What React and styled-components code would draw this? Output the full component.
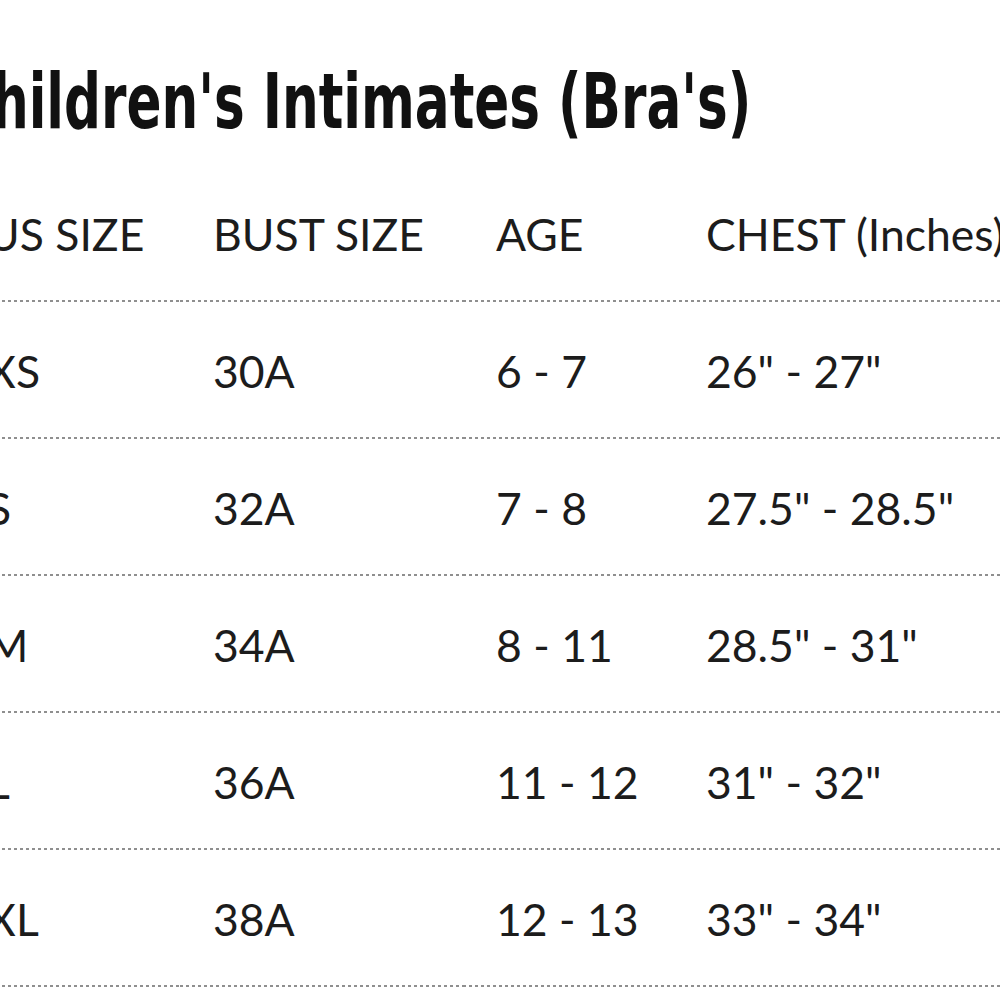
import styled, { createGlobalStyle } from "styled-components";

const rows = [
  ["XS", "30A", "6 - 7", "26\" - 27\""],
  ["S", "32A", "7 - 8", "27.5\" - 28.5\""],
  ["M", "34A", "8 - 11", "28.5\" - 31\""],
  ["L", "36A", "11 - 12", "31\" - 32\""],
  ["XL", "38A", "12 - 13", "33\" - 34\""],
];

const headers = ["US SIZE", "BUST SIZE", "AGE", "CHEST (Inches)"];

function App() {
  return (
    <Page>
      <GlobalStyle />
      <TitleWrap>
        <Title>Children's Intimates (Bra's)</Title>
      </TitleWrap>
      <Table>
        {headers.map((h) => (
          <Cell key={h}>{h}</Cell>
        ))}
        {rows.map((r) =>
          r.map((v, i) => <Cell key={r[0] + i}>{v}</Cell>)
        )}
      </Table>
    </Page>
  );
}

export default App;

const GlobalStyle = createGlobalStyle`
  html, body {
    margin: 0;
    padding: 0;
    background: #fff;
    overflow: hidden;
  }
`;

const Page = styled.div`
  width: 1000px;
  height: 1000px;
  overflow: hidden;
  background: #fff;
`;

const TitleWrap = styled.div`
  height: 75px;
  margin-top: 64px;
  margin-left: -46px;
  white-space: nowrap;
`;

const Title = styled.h1`
  display: inline-block;
  margin: 0;
  font-family: "DejaVu Sans Condensed", "DejaVu Sans", sans-serif;
  font-stretch: condensed;
  font-weight: bold;
  font-size: 76px;
  line-height: 75px;
  color: #111;
  transform: scaleX(0.755);
  transform-origin: left center;
`;

const Table = styled.div`
  display: grid;
  grid-template-columns: 226px 283px 210px 1fr;
  grid-auto-rows: 137px;
  margin-top: 26px;
  margin-left: -46px;
  width: 1100px;
`;

const Cell = styled.div`
  display: flex;
  align-items: center;
  padding-left: 33px;
  font-family: Lato, "Open Sans", sans-serif;
  font-size: 44.5px;
  color: #1c1c1c;
  white-space: nowrap;
  background: repeating-linear-gradient(
      to right,
      #8f8f8f 0 3px,
      transparent 3px 6px
    )
    left bottom / 100% 2px no-repeat;
`;
